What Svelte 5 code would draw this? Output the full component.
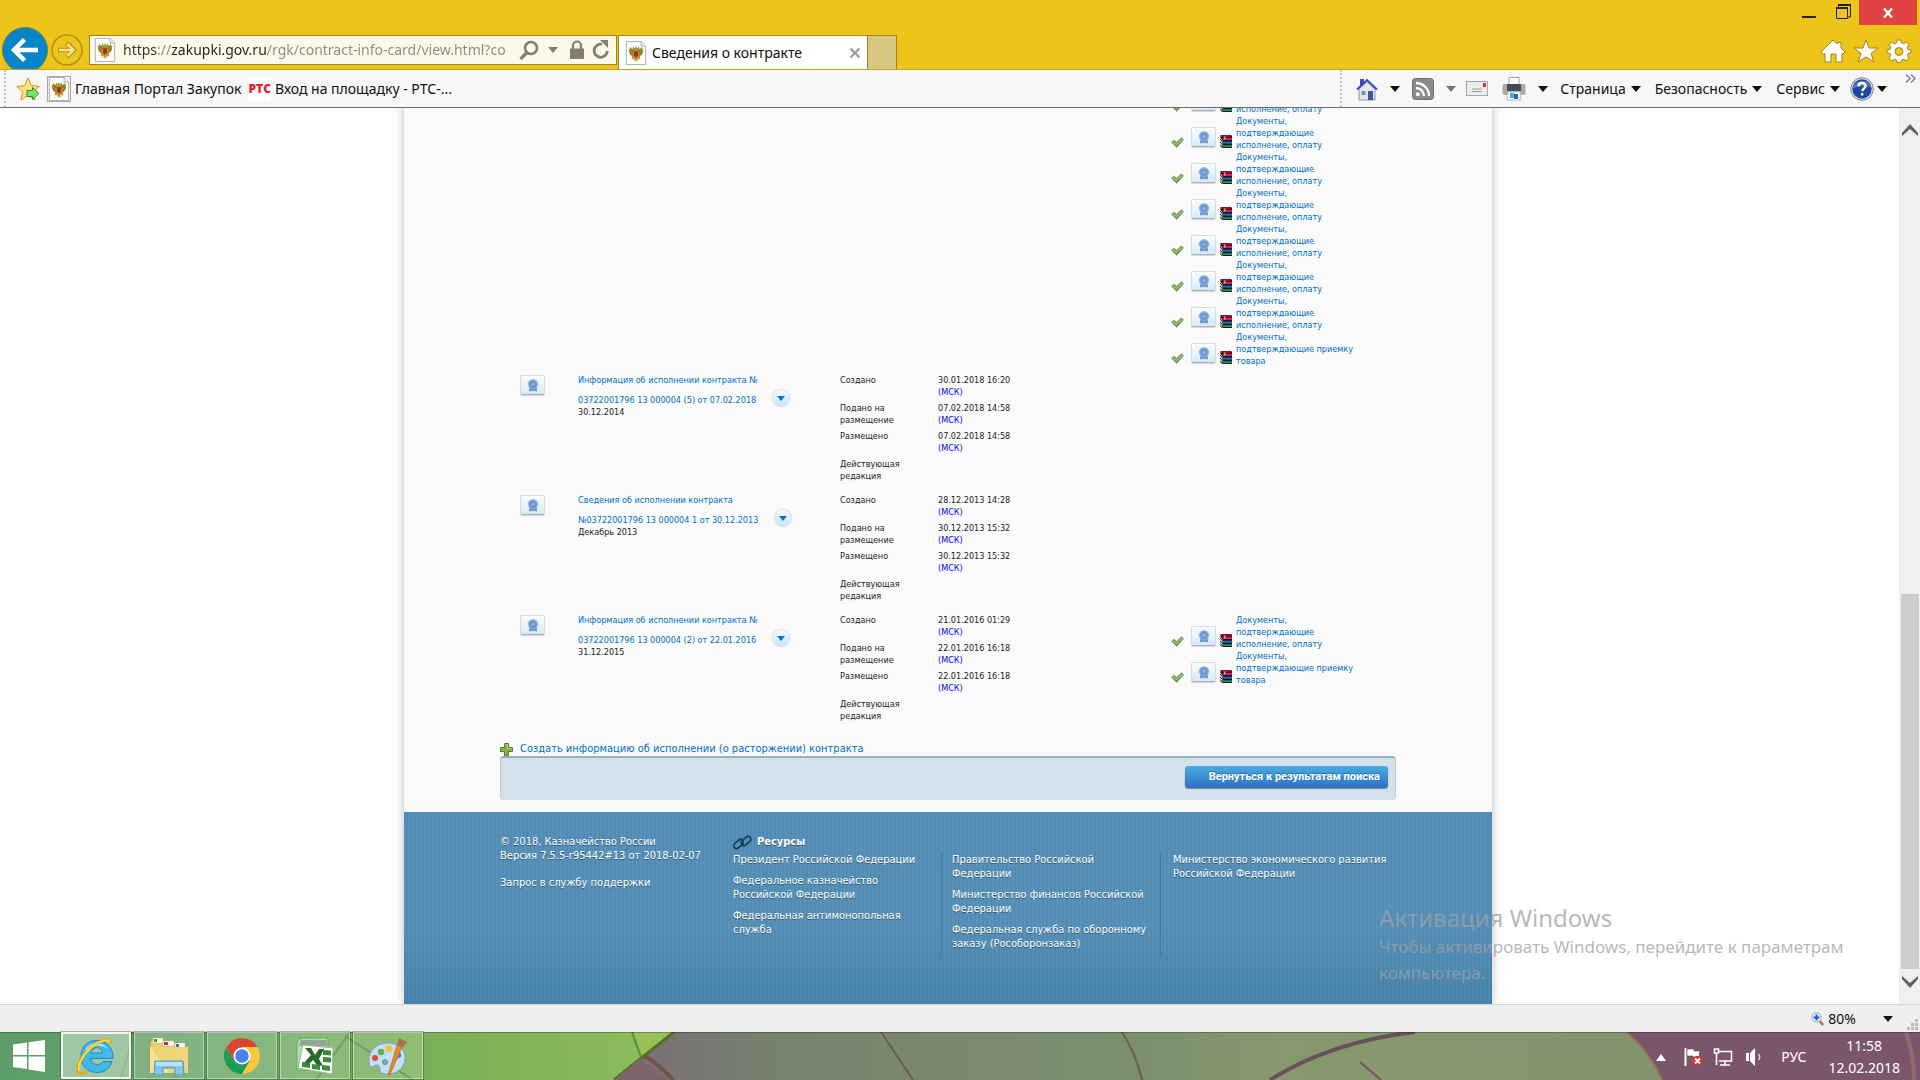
<script>
  const payment = 'Документы, подтверждающие исполнение, оплату';
  const acceptance = 'Документы, подтверждающие приемку товара';

  const earlierDocs = [...Array(7).fill(payment), acceptance];

  const records = [
    {
      title: 'Информация об исполнении контракта №',
      number: '03722001796 13 000004 (5) от 07.02.2018',
      period: '30.12.2014',
      dates: ['30.01.2018 16:20', '07.02.2018 14:58', '07.02.2018 14:58'],
      docs: []
    },
    {
      title: 'Сведения об исполнении контракта',
      number: '№03722001796 13 000004 1 от 30.12.2013',
      period: 'Декабрь 2013',
      dates: ['28.12.2013 14:28', '30.12.2013 15:32', '30.12.2013 15:32'],
      docs: []
    },
    {
      title: 'Информация об исполнении контракта №',
      number: '03722001796 13 000004 (2) от 22.01.2016',
      period: '31.12.2015',
      dates: ['21.01.2016 01:29', '22.01.2016 16:18', '22.01.2016 16:18'],
      docs: [payment, acceptance]
    }
  ];

  const stages = ['Создано', 'Подано на размещение', 'Размещено'];

  const resources = [
    ['Президент Российской Федерации', 'Федеральное казначейство Российской Федерации', 'Федеральная антимонопольная служба'],
    ['Правительство Российской Федерации', 'Министерство финансов Российской Федерации', 'Федеральная служба по оборонному заказу (Рособоронзаказ)'],
    ['Министерство экономического развития Российской Федерации']
  ];

  let address = $state('https://zakupki.gov.ru/rgk/contract-info-card/view.html?co');
</script>

{#snippet eagle()}
  <svg class="eagle" viewBox="0 0 22 26" aria-hidden="true">
    <path d="M.5.5h16l5 5v20H.5z" fill="#fdfdfd" stroke="#a9a9a9" />
    <path d="M16.500.5v5h5" fill="#eee" stroke="#a9a9a9" />
    <path d="M3 8l2 1-1-3 3 3 1-3 2 2 1-3 1 3 2-2 1 3 3-3-1 3 2-1-1 6-3 3 1 3-3-1-2 3-2-3-3 1 1-3-3-3z" fill="#a8942c" />
    <path d="M4 11l3 4M18 11l-3 4M5 8l3 4M17 8l-3 4" stroke="#6b5a14" stroke-width="1" />
    <path d="M9 11h4v5l-2 2-2-2z" fill="#b3202a" />
    <path d="M8 20l3 2 3-2" fill="none" stroke="#c8b45a" />
  </svg>
{/snippet}

{#snippet caret()}
  <svg class="caret" viewBox="0 0 10 6" aria-hidden="true"><path d="M0 0h10L5 6z" fill="currentColor" /></svg>
{/snippet}

{#snippet seal()}
  <button class="seal" aria-label="Электронная подпись">
    <svg viewBox="0 0 12 13" aria-hidden="true">
      <path d="M2.500 8L2 12.500l2-.8 1.500.8.5-3 .5 3 1.500-.8 2 .8L9.500 8z" fill="#6090cb" />
      <circle cx="6" cy="5.300" r="4.600" fill="#7ba3d6" stroke="#8db0dc" stroke-width="1.400" stroke-dasharray="1.500 .9" />
      <circle cx="6" cy="5.300" r="2.700" fill="#8aaedb" stroke="#4d7ebb" stroke-width=".8" />
    </svg>
  </button>
{/snippet}

{#snippet docList(docs)}
  <ul class="docs">
    {#each docs as doc}
      <li>
        <svg class="check" viewBox="0 0 13 11" aria-hidden="true">
          <path d="M.4 5.200L2.800 3l2.700 2.200L10.500.6l2.200 2.200L5.700 10.500z" fill="#6c9448" stroke="#8fae76" stroke-width=".6" />
          <path d="M1.800 4.800L5.500 7.400 11.300 2" fill="none" stroke="#a4c487" stroke-width="1.200" />
        </svg>
        {@render seal()}
        <svg class="archive" viewBox="0 0 12 13" aria-hidden="true">
          <path d="M0 2L2 0h9l1 1v12H2L0 11z" fill="#1d1418" />
          <path d="M0 2l2.500 3v8L0 10.500z" fill="#c9c9c9" />
          <path d="M0 4l2.500 2.500M0 7l2.500 2.500M0 9.500L2.500 12" stroke="#333" />
          <path d="M0 0h10l2 2.500H2.500z" fill="#8c1237" />
          <path d="M3 3h9v2H3z" fill="#d81b72" />
          <path d="M3 6.700h9v2H3z" fill="#1672b8" />
          <path d="M3 10.200h9v1.900H3z" fill="#149268" />
          <path d="M4 1.500h1.500v3H4z" fill="#d9b13c" />
        </svg>
        <a href="#doc">{doc}</a>
      </li>
    {/each}
  </ul>
{/snippet}

<div class="screen">
  <header class="titlebar">
    <div class="window-controls">
      <button aria-label="Свернуть"><svg width="16" height="20" viewBox="0 0 16 20"><path d="M1 16h14v2H1z" fill="#222" /></svg></button>
      <button aria-label="Восстановить">
        <svg width="16" height="20" viewBox="0 0 16 20"><path d="M3.500 7V4.500h12V17H13" fill="none" stroke="#222" stroke-width="1" /><path d="M3 4h13v2H3z" fill="#222" /><path d="M1.500 7.500h11v11h-11z" fill="none" stroke="#222" /><path d="M1 7h12v2H1z" fill="#222" /></svg>
      </button>
      <button class="close" aria-label="Закрыть"><svg width="12" height="10" viewBox="0 0 12 10"><path d="M2 .5l8 9M10 .5l-8 9" stroke="#fff" stroke-width="2.400" /></svg></button>
    </div>
    <div class="nav-row">
      <button class="back" aria-label="Назад">
        <svg viewBox="0 0 46 46"><circle cx="23" cy="23" r="22.500" fill="#0686c8" stroke="#6f7f4a" /><path d="M36 23H13M22.500 12.500L12 23l10.500 10.500" fill="none" stroke="#fff" stroke-width="4.500" /></svg>
      </button>
      <button class="forward" aria-label="Вперёд">
        <svg viewBox="0 0 32 32"><circle cx="16" cy="16" r="15" fill="none" stroke="#b0911a" stroke-width="1.500" /><path d="M7 16h15M16 9l7 7-7 7" fill="none" stroke="#b0911a" stroke-width="4.500" /><path d="M8 16h14M16.500 10l6 6-6 6" fill="none" stroke="#f8e48c" stroke-width="2.600" /></svg>
      </button>
      <div class="address">
        {@render eagle()}
        <input aria-label="Адрес" bind:value={address} />
        <button aria-label="Поиск"><svg width="20" height="20" viewBox="0 0 20 20"><circle cx="12" cy="8" r="6" fill="none" stroke="#857d70" stroke-width="2.600" /><path d="M8 12.500L1.500 19" stroke="#857d70" stroke-width="3.200" /></svg></button>
        <button class="drop" aria-label="Показать адреса">{@render caret()}</button>
        <svg class="lock" width="14" height="20" viewBox="0 0 14 20" aria-hidden="true"><path d="M3 9V5.500a4 4 0 0 1 8 0V9" fill="none" stroke="#857d70" stroke-width="2.200" /><path d="M0 8.500h14V19H0z" fill="#857d70" /></svg>
        <button aria-label="Обновить"><svg width="18" height="20" viewBox="0 0 18 20"><path d="M10 4.200A6.600 6.600 0 1 0 15.300 11" fill="none" stroke="#857d70" stroke-width="2.800" /><path d="M8 0h8v8z" fill="#857d70" /></svg></button>
      </div>
      <div class="tab">
        {@render eagle()}
        <span>Сведения о контракте</span>
        <button aria-label="Закрыть вкладку"><svg width="12" height="12" viewBox="0 0 12 12"><path d="M1.500 1.500l9 9M10.500 1.500l-9 9" stroke="#9f9f9f" stroke-width="2.400" /></svg></button>
      </div>
      <button class="new-tab" aria-label="Новая вкладка"></button>
      <div class="tools">
        <button aria-label="Домой"><svg width="26" height="24" viewBox="0 0 26 24"><path d="M13 1L17 5V3.500h4V9l4 4-2 2-1-.5V23h-6v-8h-5v8H5v-8.500L3.500 15.500 1 13z" fill="#fff" stroke="#a3851a" /></svg></button>
        <button aria-label="Избранное"><svg width="26" height="24" viewBox="0 0 26 24"><path d="M13 1l3 8h9l-7 5.500L20.800 23 13 17.800 5.200 23 8 14.500 1 9h9z" fill="#fff" stroke="#a3851a" /></svg></button>
        <button aria-label="Сервис"><svg width="26" height="24" viewBox="0 0 26 24"><path d="M11 1h4l.6 3 2 .8 2.600-1.700 2.700 2.700-1.700 2.600.8 2 3 .6v3l-3 .6-.8 2 1.700 2.600-2.700 2.700-2.600-1.700-2 .8-.6 2.500h-4l-.6-2.500-2-.8-2.600 1.700-2.700-2.700 1.700-2.600-.8-2-3-.6v-3l3-.6.8-2L3.100 5.800l2.700-2.700 2.600 1.700 2-.8z" fill="#fff" stroke="#a3851a" /><circle cx="13" cy="12.500" r="4" fill="#edc51a" stroke="#a3851a" /></svg></button>
      </div>
    </div>
  </header>

  <nav class="command-bar">
    <div class="favorites">
      <button aria-label="Добавить в избранное">
        <svg width="24" height="24" viewBox="0 0 24 24"><path d="M12 1l3.300 7.600 8 .8-6 5.400L19 23l-7-4.500L5 23l1.700-8.200-6-5.400 8-.8z" fill="#ffe07a" stroke="#d3912a" /><path d="M11 13.500h5.500v-3l6.500 6-6.500 6v-3H11z" fill="#7be067" stroke="#2a8a2a" /></svg>
      </button>
      <a class="fav" href="#main"><span class="framed">{@render eagle()}</span>Главная Портал Закупок</a>
      <a class="fav" href="#rts"><b class="rts">РТС</b>Вход на площадку - РТС-...</a>
    </div>
    <div class="commands">
      <button class="cmd house" aria-label="Домашняя страница">
        <svg width="22" height="24" viewBox="0 0 22 24"><path d="M4 2h4v6H4z" fill="#3d4fc0" /><path d="M3 12l8-7 8 7v11H3z" fill="#e3e6ea" stroke="#8e99a5" /><path d="M1 12.500L11 3l10 9.500" fill="none" stroke="#3547b5" stroke-width="1.800" /><path d="M12 14h5v9h-5z" fill="#3c5f93" /><path d="M5.500 14h4v4h-4z" fill="#7390b5" /></svg>
        {@render caret()}
      </button>
      <button class="cmd feed" aria-label="Веб-каналы">
        <svg width="22" height="22" viewBox="0 0 22 22"><rect x=".5" y=".5" width="21" height="21" rx="3" fill="#8b8b8b" stroke="#6d6d6d" /><circle cx="5.800" cy="16.200" r="2" fill="#fff" /><path d="M4 10a8 8 0 0 1 8 8M4 5a13 13 0 0 1 13 13" fill="none" stroke="#fff" stroke-width="2.300" /></svg>
        {@render caret()}
      </button>
      <button class="cmd mail" aria-label="Почта">
        <svg width="22" height="16" viewBox="0 0 22 16"><rect x=".5" y=".5" width="21" height="14" fill="#ececec" stroke="#a5a5a5" /><path d="M17 2h3v4h-3z" fill="#e2322c" /><path d="M6 8h10M6 10.500h10" stroke="#9c9c9c" /></svg>
      </button>
      <button class="cmd print" aria-label="Печать">
        <svg width="24" height="24" viewBox="0 0 24 24"><path d="M7 .5h10V8H7z" fill="#fff" stroke="#9aa5b0" /><rect x=".5" y="7" width="23" height="11" rx="2" fill="#a5aaae" /><path d="M5 7h14v7H5z" fill="#454b52" /><path d="M6 15h12l1 8H5z" fill="#fff" stroke="#b7c2cc" /><path d="M8 16h4v5H8z" fill="#3db2c4" /><path d="M12 17h4v5h-4z" fill="#2567b5" /></svg>
        {@render caret()}
      </button>
      <button class="cmd">Страница {@render caret()}</button>
      <button class="cmd">Безопасность {@render caret()}</button>
      <button class="cmd service">Сервис {@render caret()}</button>
      <button class="cmd help" aria-label="Справка">
        <svg width="24" height="24" viewBox="0 0 24 24"><circle cx="12" cy="12" r="11.300" fill="#d9dce4" stroke="#7f838d" /><circle cx="12" cy="12" r="9.700" fill="#1f47a0" /><path d="M3 11a9.500 9.500 0 0 1 18-1q-9-2-18 1z" fill="#5279c8" /><path d="M8.500 9.300c0-4.500 7-4.200 7-.3 0 2.600-3.300 2.600-3.300 5.200M12.200 16v2.500" fill="none" stroke="#fff" stroke-width="2.300" /></svg>
        {@render caret()}
      </button>
      <button class="more" aria-label="Дополнительно"><svg width="11" height="9" viewBox="0 0 11 9"><path d="M1 .5l4 4-4 4M6 .5l4 4-4 4" fill="none" stroke="#7a76b8" stroke-width="1.400" /></svg></button>
    </div>
  </nav>

  <div class="browser">
    <div class="viewport">
      <main class="panel">
        <div class="content">
          <table>
            <colgroup><col class="c-seal" /><col class="c-name" /><col class="c-status" /><col /></colgroup>
            <tbody>
              <tr>
                <td></td><td></td><td></td>
                <td class="first-docs">{@render docList(earlierDocs)}</td>
              </tr>
              {#each records as record}
                <tr class="record">
                  <td class="seal-cell">{@render seal()}</td>
                  <td>
                    <a class="name" href="#record">{record.title}</a>
                    <div class="number">
                      <a href="#record">{record.number}</a>
                      <button class="expand" aria-label="Меню записи">{@render caret()}</button>
                    </div>
                    <div>{record.period}</div>
                  </td>
                  <td>
                    <dl>
                      {#each stages as stage, i}
                        <dt>{stage}</dt>
                        <dd>{record.dates[i]}<br /><span class="msk">(МСК)</span></dd>
                      {/each}
                      <dt>Действующая редакция</dt>
                      <dd></dd>
                    </dl>
                  </td>
                  <td>{@render docList(record.docs)}</td>
                </tr>
              {/each}
            </tbody>
          </table>
          <a class="create" href="#create">
            <svg width="13" height="13" viewBox="0 0 13 13" aria-hidden="true"><path d="M4.500.5h4v4h4v4h-4v4h-4v-4h-4v-4h4z" fill="#7fb04a" stroke="#567f33" /><path d="M5.500 1.500h2v4h4" fill="none" stroke="#b5d68c" /></svg>
            Создать информацию об исполнении (о расторжении) контракта
          </a>
          <div class="action-bar"><button>Вернуться к результатам поиска</button></div>
        </div>
        <footer>
          <div class="about">
            <p>© 2018, Казначейство России</p>
            <p>Версия 7.5.5-r95442#13 от 2018-02-07</p>
            <a href="#support">Запрос в службу поддержки</a>
          </div>
          <section>
            <h2>
              <svg width="19" height="15" viewBox="0 0 19 15" aria-hidden="true"><g fill="none" stroke="#16425e" stroke-width="1.700"><rect x="-5.500" y="-2.800" width="11" height="5.600" rx="2.800" transform="translate(5.500 9) rotate(-42)" /><rect x="-5.500" y="-2.800" width="11" height="5.600" rx="2.800" transform="translate(13 6) rotate(-42)" /></g></svg>
              Ресурсы
            </h2>
            <div class="resources">
              {#each resources as column}
                <ul>
                  {#each column as item}<li><a href="#resource">{item}</a></li>{/each}
                </ul>
              {/each}
            </div>
          </section>
        </footer>
      </main>
    </div>
    <div class="scrollbar" aria-hidden="true">
      <svg width="16" height="13" viewBox="0 0 16 13"><path d="M0 10L8 1l8 9v3L8 6l-8 7z" fill="#5e5e5e" /></svg>
      <div class="track"><div class="thumb"></div></div>
      <svg width="16" height="13" viewBox="0 0 16 13"><path d="M0 3l8 9 8-9V0L8 7 0 0z" fill="#5e5e5e" /></svg>
    </div>
  </div>

  <div class="statusbar">
    <button>
      <svg width="13" height="14" viewBox="0 0 13 14" aria-hidden="true"><path d="M8 8l4 5" stroke="#a5703f" stroke-width="2.600" /><circle cx="5.500" cy="5.500" r="4.800" fill="#e8f1fa" stroke="#9aa9bb" /><path d="M5.500 2.500v6M2.500 5.500h6" stroke="#1560c4" stroke-width="2" /></svg>
      <span>80%</span>
      {@render caret()}
    </button>
    <svg class="grip" width="12" height="12" viewBox="0 0 12 12" aria-hidden="true"><path d="M8 0h3v3H8zM4 4h3v3H4zM8 4h3v3H8zM0 8h3v3H0zM4 8h3v3H4zM8 8h3v3H8z" fill="#bcbcbc" /></svg>
  </div>

  <div class="taskbar">
    <svg class="wallpaper" viewBox="0 0 1920 48" preserveAspectRatio="none" aria-hidden="true">
      <defs>
        <linearGradient id="leaf"><stop offset="0" stop-color="#5c9c68" /><stop offset=".3" stop-color="#66a466" /><stop offset=".5" stop-color="#72ac5c" /><stop offset=".7" stop-color="#7cb254" /><stop offset="1" stop-color="#8fbb5c" /></linearGradient>
        <linearGradient id="petal"><stop offset="0" stop-color="#7a6d75" /><stop offset=".33" stop-color="#7a6d75" /><stop offset=".4" stop-color="#76826e" /><stop offset=".6" stop-color="#7c906f" /><stop offset=".67" stop-color="#88986d" /><stop offset="1" stop-color="#7e8f6e" /></linearGradient>
      </defs>
      <rect width="1920" height="48" fill="url(#petal)" />
      <path d="M0 0h674L614 48H0z" fill="url(#leaf)" />
      <path d="M632 0h42l-34 27z" fill="#98c058" />
      <path d="M674 0L614 48" stroke="#55701f" stroke-width="3" />
      <path d="M632 0l9 25" stroke="#4f9238" stroke-width="2" />
      <path d="M640 27l-26 21h55z" fill="#7d656c" />
      <path d="M644 24q14 7 29 24" fill="none" stroke="#6d5644" stroke-width="4" />
      <path d="M132 0q-2 20-12 48M350 0l-34 48M345 4l68 44" fill="none" stroke="#65804a" stroke-width="2" />
      <path d="M881 0l32 48M1122 0q14 22 20 48" fill="none" stroke="#6b5f54" stroke-width="2" />
      <path d="M1270 48q60-38 145-48" fill="none" stroke="#66505c" stroke-width="4" />
      <path d="M1360 30l21 18" stroke="#755468" stroke-width="2" />
      <path d="M1626 0q22 18 36 48h258V0z" fill="#7b556c" />
      <path d="M1626 0q22 18 36 48" fill="none" stroke="#9a7a4a" stroke-width="2" />
      <path d="M1906 0q8 24 8 48" fill="none" stroke="#936b6c" stroke-width="4" />
      <path d="M0 .5h1920" stroke="#000" stroke-opacity=".25" />
    </svg>
    <button class="start" aria-label="Пуск"><svg width="32" height="32" viewBox="0 0 32 32"><path d="M0 4.500L14 2.500V15H0zM15.500 2.300L32 0v15H15.500zM0 16.500h14V29L0 27zM15.500 16.500H32V32l-16.500-2.500z" fill="#fff" /></svg></button>
    <button class="app active" aria-label="Internet Explorer">
      <svg width="40" height="38" viewBox="0 0 40 38"><path d="M20.500 3.500C11 3.500 5 10.500 5 19.500S11.500 35.500 21 35.500c7.500 0 13-4 15-11H27c-1.200 2-3 3-5.800 3-4 0-6.200-2.500-6.500-6H37C37.500 11 31 3.500 20.500 3.500zM14.800 16c.6-3.300 2.800-5.300 6-5.300s5.500 2 5.800 5.300z" fill="#3fb9ea" stroke="#1f87c4" /><path d="M8 15q3-8 12-9 8 0 12 6-6-4-12-3Q13 10 8 15z" fill="#a6e5fb" /><path d="M35 6c0-5-7-4-15 1C9 14 0 27 2 34c1 3 5 3 9 1" fill="none" stroke="#e8a80c" stroke-width="3" /><path d="M34 5c-2-3-7-2-14 2C9 14 1 27 3 34" fill="none" stroke="#ffdf4a" stroke-width="1.500" /></svg>
    </button>
    <button class="app" aria-label="Проводник">
      <svg width="40" height="38" viewBox="0 0 40 38"><path d="M3 3h12l2 3h14v6h6v24H1V5z" fill="#ecc968" stroke="#b99336" /><path d="M4 1h10v5H4zM14 4h11v5H14zM26 6h10v5H26z" fill="#fff" stroke="#c9b06a" stroke-width=".5" /><path d="M5 2h3v3H5z" fill="#3b9c4c" /><path d="M15 5h4v3h-4z" fill="#d8322c" /><path d="M27 7h3v3h-3z" fill="#2f75c6" /><path d="M1 10h38v26H1z" fill="#f0d576" /><path d="M1 10l20 26H1z" fill="#f6e39a" /><path d="M6 24h28l1 14h-9v-7H14v7H5z" fill="#7cc7ea" stroke="#4c9bc6" /><path d="M7 25h26v4H7z" fill="#b8e3f5" /></svg>
    </button>
    <button class="app" aria-label="Google Chrome">
      <svg width="38" height="38" viewBox="0 0 38 38"><circle cx="19" cy="19" r="18" fill="#f9c740" /><path d="M19 19L3.400 10A18 18 0 0 1 34.600 10H19z" fill="#d94435" /><path d="M3.400 10A18 18 0 0 0 19 37l7.800-13.500L19 19 11.200 23.500z" fill="#1c9c58" /><path d="M3.400 10l7.800 13.500L19 10z" fill="#d94435" /><circle cx="19" cy="19" r="8.500" fill="#fff" /><circle cx="19" cy="19" r="6.800" fill="#4285f0" /></svg>
    </button>
    <button class="app" aria-label="Excel">
      <svg width="38" height="38" viewBox="0 0 38 38"><path d="M1 33V8q0-7 7-7h24v32z" fill="#bcd3bc" stroke="#5bbb3d" /><path d="M5 3h26v6H3z" fill="#8fa893" /><path d="M7 8l30 3-1 26L2 31z" fill="#fff" stroke="#9eb99e" /><path d="M9 11h6l4 7 4-6h5l-5 10 4 7-6-1-4-5-4 4-5-1 7-8z" fill="#276b2a" /><path d="M27 13l8 .5v5l-8-.5zM27 20l8 .5v5l-8-.5zM26 28l8 1v5l-8-1zM16 27l8 1v5l-8-1zM6 25l8 1v5l-8-1z" fill="#3d8a3c" /></svg>
    </button>
    <button class="app" aria-label="Paint">
      <svg width="40" height="38" viewBox="0 0 40 38"><path d="M20 6C9 6 1 13 1 23c0 5 1 8 5 6 3-2 6-1 6 3-1 4 3 5 8 5 10 0 17-7 17-16S30 6 20 6z" fill="#c3e1f3" stroke="#6fa5cc" /><circle cx="17" cy="25" r="2.500" fill="#7fb0b2" stroke="#5d8fa5" /><circle cx="7" cy="21" r="3" fill="#e4453b" /><circle cx="13" cy="15" r="3.200" fill="#5bb04a" /><circle cx="21" cy="11.500" r="3.500" fill="#f5c33b" /><circle cx="30" cy="18" r="3.200" fill="#4a86d8" /><path d="M34 10L22 38h-2l9-30z" fill="#e88a2a" stroke="#b3601a" stroke-width=".6" /><path d="M31 1l4 2 4 2-5 6-5-3z" fill="#a8754a" /></svg>
    </button>
    <div class="tray">
      <svg width="10" height="7" viewBox="0 0 10 7" aria-hidden="true"><path d="M0 7h10L5 0z" fill="#fff" /></svg>
      <svg class="flag" width="20" height="20" viewBox="0 0 20 20" aria-hidden="true"><path d="M1.500 1v18" stroke="#fff" stroke-width="2" /><path d="M3 2h7v2h6l-1 3 1 3H9V9H3z" fill="#fff" stroke="#443" stroke-width=".5" /><circle cx="13.500" cy="14" r="5.300" fill="#d9352c" /><path d="M11 11.500l5 5M16 11.500l-5 5" stroke="#fff" stroke-width="1.800" /></svg>
      <svg class="net" width="20" height="20" viewBox="0 0 20 20" aria-hidden="true"><path d="M6 4.500h12.500v9.500H6M12 14v4M7 18h10" fill="none" stroke="#fff" stroke-width="1.600" /><path d="M1.500 2h4v4h-4zM3.500 6v12" fill="none" stroke="#fff" stroke-width="1.600" /></svg>
      <svg class="sound" width="18" height="20" viewBox="0 0 18 20" aria-hidden="true"><path d="M1 6h3v8H1zM5 6l5-5v18l-5-5z" fill="#fff" /><path d="M13.500 7q2.500 3 0 6" fill="none" stroke="#ddd" stroke-width="1.400" /></svg>
      <span class="lang">РУС</span>
      <time datetime="2018-02-12T11:58">11:58<br />12.02.2018</time>
    </div>
  </div>

  <aside class="watermark">
    <strong>Активация Windows</strong>
    <p>Чтобы активировать Windows, перейдите к параметрам компьютера.</p>
  </aside>
</div>

<style>
  :global(body) {
    margin: 0;
    background: #fff;
  }
  .screen {
    position: relative;
    display: flex;
    flex-direction: column;
    height: 100vh;
    overflow: hidden;
    font: 14px/20px 'Noto Sans', sans-serif;
    color: #111;
  }
  .screen :global(svg) {
    display: block;
    flex: none;
  }
  button {
    display: flex;
    align-items: center;
    justify-content: center;
    flex: none;
    margin: 0;
    padding: 0;
    border: 0;
    background: none;
    color: inherit;
    font: inherit;
  }
  a {
    color: inherit;
    text-decoration: none;
  }
  p, ul, dl, dd, h2 {
    margin: 0;
    padding: 0;
    list-style: none;
  }
  .eagle {
    width: 22px;
    height: 24px;
  }
  .caret {
    width: 10px;
    height: 6px;
  }

  .titlebar {
    flex: none;
    height: 69px;
    overflow: hidden;
    background: #edc51a;
    border-bottom: 1px solid #c9a51c;
  }
  .window-controls {
    display: flex;
    justify-content: flex-end;
    align-items: flex-start;
    gap: 18px;
    height: 27px;
    padding-right: 3px;
  }
  .window-controls .close {
    width: 58px;
    height: 25px;
    margin-left: -10px;
    background: #e04343;
  }
  .nav-row {
    display: flex;
    align-items: flex-start;
    padding: 0 8px 0 2px;
  }
  .back {
    width: 46px;
    height: 46px;
  }
  .back svg {
    width: 46px;
  }
  .forward {
    margin: 7px 6px 0 3px;
  }
  .forward svg {
    width: 32px;
  }
  .address {
    display: flex;
    align-items: center;
    box-sizing: border-box;
    width: 528px;
    height: 30px;
    margin-top: 8px;
    padding: 0 6px 0 4px;
    border: 1px solid #a3861a;
    background: #fdfaea;
  }
  .address input {
    flex: 1;
    min-width: 0;
    margin: 0 4px 0 7px;
    padding: 0;
    border: 0;
    outline: 0;
    font: 14px/24px 'Noto Sans', sans-serif;
    color: transparent;
    background: linear-gradient(90deg, #333 0 34px, #888 34px 48px, #222 48px 144px, #888 144px);
    background-clip: text;
  }
  .address .drop {
    margin: 0 12px 0 9px;
    color: #857d70;
  }
  .lock {
    margin-right: 8px;
  }
  .tab {
    display: flex;
    align-items: center;
    box-sizing: border-box;
    width: 250px;
    height: 34px;
    margin: 8px 0 0 1px;
    padding: 0 6px;
    border: 1px solid #a3861a;
    border-bottom: 0;
    background: #fff;
  }
  .tab span {
    flex: 1;
    padding-left: 5px;
  }
  .new-tab {
    box-sizing: border-box;
    width: 29px;
    height: 34px;
    margin-top: 8px;
    border: 1px solid #a3861a;
    border-width: 1px 1px 0 0;
    background: #d6c680;
  }
  .tools {
    display: flex;
    gap: 7px;
    margin: 12px 0 0 auto;
  }

  .command-bar {
    display: flex;
    justify-content: space-between;
    flex: none;
    box-sizing: border-box;
    height: 38px;
    background: #f7f7f7;
    border-bottom: 1px solid #6d6d6d;
  }
  .favorites,
  .commands {
    display: flex;
    align-items: center;
    border-left: 2px dotted #c4c4c4;
  }
  .favorites {
    margin-left: 4px;
    padding-left: 10px;
  }
  .fav {
    display: flex;
    align-items: center;
    gap: 4px;
    margin-left: 7px;
    white-space: nowrap;
  }
  .framed {
    border: 1px solid #a9a9a9;
  }
  .rts {
    padding: 1px 0;
    background: #fff;
    color: #e6202e;
    font: 800 12px/22px 'Open Sans', sans-serif;
  }
  .commands {
    padding: 0 4px 0 14px;
  }
  .cmd {
    gap: 5px;
    margin-right: 14px;
  }
  .house,
  .feed,
  .print {
    gap: 12px;
    margin-right: 12px;
  }
  .feed {
    margin-right: 10px;
  }
  .feed .caret {
    color: #777;
  }
  .service {
    margin-right: 10px;
  }
  .help {
    gap: 3px;
    margin-right: 18px;
  }
  .more {
    align-self: flex-start;
    margin-top: 4px;
  }

  .browser {
    display: flex;
    flex: 1;
    min-height: 0;
    background: #fff;
  }
  .viewport {
    display: flex;
    flex-direction: column;
    justify-content: flex-end;
    flex: 1;
    overflow: hidden;
    padding-right: 3px;
    color: #222;
    font: 9px/12px 'DejaVu Sans Condensed', 'DejaVu Sans', sans-serif;
  }
  .panel {
    width: 100%;
    max-width: 1088px;
    margin: 0 auto;
    background: #fafafa;
    box-shadow: 0 0 10px rgba(0, 0, 0, 0.25);
  }
  .content {
    padding: 0 96px 12px;
  }
  table {
    width: 100%;
    border-collapse: collapse;
    table-layout: fixed;
  }
  .c-seal {
    width: 78px;
  }
  .c-name {
    width: 262px;
  }
  .c-status {
    width: 331px;
  }
  td {
    padding: 0;
    vertical-align: top;
  }
  .first-docs {
    padding-bottom: 7px;
  }
  .record {
    height: 120px;
  }
  .seal-cell {
    padding: 1px 0 0 20px;
  }
  .seal {
    box-sizing: border-box;
    width: 25px;
    height: 20px;
    border: 1px solid #d5dde3;
    border-bottom-color: #a9b3ba;
    border-radius: 2px;
    background: linear-gradient(#fbfdff, #d5eaf7);
    box-shadow: 0 1px 1px rgba(0, 0, 0, 0.15);
  }
  .seal svg {
    width: 12px;
    height: 13px;
  }
  td a {
    color: #0070c4;
  }
  .name {
    display: block;
  }
  .number {
    display: flex;
    align-items: flex-end;
    gap: 17px;
    margin-top: 4px;
  }
  .expand {
    width: 16px;
    height: 16px;
    border-radius: 50%;
    background: linear-gradient(#f7fcff, #c5e5f5);
    box-shadow: 0 0 2px rgba(0, 0, 0, 0.4);
    color: #0275c6;
  }
  .expand .caret {
    width: 8px;
    height: 5px;
  }
  dl {
    display: grid;
    grid-template-columns: 78px 1fr;
    gap: 4px 20px;
  }
  dt,
  dd {
    min-height: 24px;
  }
  .msk {
    color: #0000f0;
  }
  .docs li {
    display: flex;
    align-items: flex-end;
    height: 36px;
  }
  .docs a {
    width: 128px;
    margin-left: 4px;
  }
  .check {
    width: 13px;
    height: 11px;
    margin: 0 7px 3px 0;
  }
  .docs .seal {
    margin-bottom: 4px;
  }
  .archive {
    width: 12px;
    height: 13px;
    margin: 0 0 3px 4px;
  }
  .create {
    display: flex;
    align-items: center;
    gap: 7px;
    margin-top: 8px;
    color: #0070c4;
    font-size: 11px;
    line-height: 14px;
  }
  .action-bar {
    display: flex;
    justify-content: flex-end;
    box-sizing: border-box;
    height: 44px;
    padding: 8px 7px 0;
    border: 1px solid #b9cad7;
    border-top: 2px solid #94b0c4;
    border-bottom: 0;
    border-radius: 4px;
    background: #d5e1ea;
  }
  .action-bar button {
    height: 22px;
    padding: 0 8px 0 24px;
    border-radius: 3px;
    background: linear-gradient(#48ade0, #2f70c4);
    box-shadow: 0 1px 1px rgba(0, 0, 0, 0.4);
    color: #fff;
    font: bold 11px/22px Roboto, sans-serif;
    text-shadow: 0 -1px 0 rgba(0, 0, 0, 0.3);
  }
  footer {
    display: flex;
    box-sizing: border-box;
    height: 192px;
    padding: 23px 96px 0;
    color: #fff;
    font-size: 11px;
    line-height: 14px;
    text-shadow: 0 1px 0 rgba(0, 0, 0, 0.4);
    background:
      repeating-linear-gradient(90deg, rgba(255, 255, 255, 0.02) 0 2px, rgba(0, 30, 60, 0.03) 2px 4px),
      linear-gradient(#548fb8, #5590b8 60%, #4784ac);
  }
  .about {
    flex: none;
    width: 233px;
  }
  .about a {
    display: block;
    margin-top: 13px;
  }
  section {
    flex: 1;
  }
  h2 {
    display: flex;
    align-items: center;
    gap: 5px;
    height: 14px;
    margin-bottom: 4px;
    font-size: 11px;
    line-height: 14px;
  }
  .resources {
    display: flex;
  }
  .resources ul {
    box-sizing: border-box;
    width: 219px;
    min-height: 104px;
    padding: 0 10px;
  }
  .resources ul:first-child {
    width: 208px;
    padding-left: 0;
  }
  .resources ul:last-child {
    width: 236px;
    padding: 0 0 0 12px;
  }
  .resources ul + ul {
    border-left: 1px solid #3d7aa4;
  }
  .resources li {
    margin-bottom: 7px;
  }

  .scrollbar {
    display: flex;
    flex-direction: column;
    align-items: center;
    flex: none;
    width: 21px;
    padding: 15px 0;
    box-sizing: border-box;
    background: #f0f0f0;
  }
  .track {
    display: flex;
    flex: 1;
    align-items: flex-end;
    padding-bottom: 7px;
  }
  .thumb {
    width: 18px;
    height: 45%;
    background: #cdcdcd;
  }

  .statusbar {
    display: flex;
    align-items: center;
    justify-content: flex-end;
    flex: none;
    box-sizing: border-box;
    height: 28px;
    padding-right: 1px;
    border-top: 1px solid #d5d5d5;
    background: #efefef;
  }
  .statusbar button {
    gap: 4px;
  }
  .statusbar .caret {
    margin-left: 23px;
  }
  .grip {
    align-self: flex-end;
    margin: 0 0 1px 14px;
  }

  .taskbar {
    position: relative;
    display: flex;
    flex: none;
    height: 48px;
    gap: 3px;
    color: #fff;
  }
  .wallpaper {
    position: absolute;
    inset: 0;
    width: 100%;
    height: 100%;
  }
  .taskbar button,
  .tray {
    position: relative;
  }
  .start {
    width: 58px;
  }
  .app {
    box-sizing: border-box;
    width: 70px;
    height: 47px;
    border: 1px solid rgba(255, 255, 255, 0.45);
    outline: 1px solid rgba(30, 70, 40, 0.35);
    outline-offset: 0;
    background: rgba(255, 255, 255, 0.18);
  }
  .app.active {
    border: 2px solid rgba(255, 255, 255, 0.85);
    background: rgba(255, 255, 255, 0.4);
  }
  .tray {
    display: flex;
    align-items: center;
    margin-left: auto;
    padding: 2px 20px 0 0;
  }
  .flag {
    margin-left: 18px;
  }
  .net {
    margin-left: 9px;
  }
  .sound {
    margin-left: 12px;
  }
  .lang {
    margin: 0 22px 0 18px;
  }
  time {
    line-height: 22px;
    text-align: center;
  }

  .watermark {
    position: absolute;
    left: 1379px;
    top: 902px;
    width: 500px;
    color: rgba(160, 160, 160, 0.75);
    font: 17px/26px 'Noto Sans', sans-serif;
  }
  .watermark strong {
    display: block;
    font-size: 24px;
    font-weight: 400;
    line-height: 32px;
  }
</style>
